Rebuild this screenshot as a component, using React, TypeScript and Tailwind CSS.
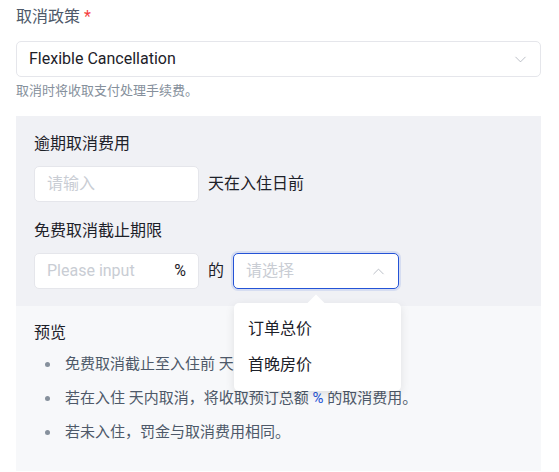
import { ChevronDown, ChevronUp } from "lucide-react";

const previewLines = [
  { before: "免费取消截止至入住前 天", pct: false },
  { before: "若在入住 天内取消，将收取预订总额 ", pct: true },
  { before: "若未入住，罚金与取消费用相同。", pct: false },
];

export default function App() {
  return (
    <div
      className="w-[559px] h-[472px] bg-white px-4 pt-[6px] text-[#4e5969] overflow-hidden"
      style={{ fontFamily: "Roboto, 'Noto Sans CJK SC', sans-serif" }}
    >
      <div className="text-[16px] leading-[22px] h-[22px]">
        取消政策 <span className="text-[#f53f3f]">*</span>
      </div>
      <div className="mt-[13px] h-[36px] w-[525px] rounded-[5px] border border-[#e5e6eb] bg-white flex items-center justify-between pl-3 pr-[10px]">
        <span className="text-[16px] text-[#1d2129]">Flexible Cancellation</span>
        <ChevronDown size={19} strokeWidth={1} className="text-[#a9aeb8]" />
      </div>
      <div className="mt-[5px] text-[13px] leading-[18px] text-[#86909c]">取消时将收取支付处理手续费。</div>

      <div className="mt-[16px] w-[525px]">
        <div className="bg-[#f0f1f5] px-[18px] pt-[17px] pb-[17px]">
          <div className="text-[16px] leading-[22px] text-[#1d2129]">逾期取消费用</div>
          <div className="mt-[11px] flex items-center gap-[9px]">
            <div className="h-[36px] w-[165px] rounded-[5px] border border-[#e5e6eb] bg-white flex items-center px-3 text-[16px] text-[#c9cdd4]">
              请输入
            </div>
            <span className="text-[16px] text-[#1d2129]">天在入住日前</span>
          </div>
          <div className="mt-[18px] text-[16px] leading-[22px] text-[#1d2129]">免费取消截止期限</div>
          <div className="mt-[11px] flex items-center gap-[9px]">
            <div className="h-[36px] w-[165px] rounded-[5px] border border-[#e5e6eb] bg-white flex items-center justify-between pl-3 pr-[12px] text-[16px]">
              <span className="text-[#c9cdd4]">Please input</span>
              <span className="text-[#1d2129]">%</span>
            </div>
            <span className="text-[16px] text-[#1d2129]">的</span>
            <div className="relative">
              <div className="h-[36px] w-[166px] rounded-[5px] border border-[#2453d6] bg-white shadow-[0_0_0_2px_rgba(36,83,214,0.12)] flex items-center justify-between pl-3 pr-[10px] text-[16px]">
                <span className="text-[#c9cdd4]">请选择</span>
                <ChevronUp size={19} strokeWidth={1} className="text-[#a9aeb8]" />
              </div>
              <div className="absolute left-[1px] top-[50px] z-10 w-[167px] rounded-[5px] bg-white shadow-[0_3px_10px_rgba(0,0,0,0.1)] py-[8px]">
                <div className="absolute left-[76px] top-[-6px] h-[12px] w-[12px] rotate-45 bg-white" />
                <div className="relative px-[14px] h-[36px] flex items-center text-[16px] text-[#1d2129]">订单总价</div>
                <div className="relative px-[14px] h-[36px] flex items-center text-[16px] text-[#1d2129]">首晚房价</div>
              </div>
            </div>
          </div>
        </div>
        <div className="bg-[#f7f8fa] px-[18px] pt-[16px] h-[165px]">
          <div className="text-[16px] leading-[22px] text-[#1d2129]">预览</div>
          <ul className="mt-[9px] flex flex-col gap-[12px] pl-[11px]">
            {previewLines.map((l, i) => (
              <li key={i} className="flex items-center text-[15px] leading-[22px]">
                <span className="w-[5px] h-[5px] rounded-full bg-[#86909c] mr-[15px]" />
                <span>
                  {l.before}
                  {l.pct && (
                    <>
                      <span className="text-[#2453d6]">%</span> 的取消费用。
                    </>
                  )}
                </span>
              </li>
            ))}
          </ul>
        </div>
      </div>
    </div>
  );
}
